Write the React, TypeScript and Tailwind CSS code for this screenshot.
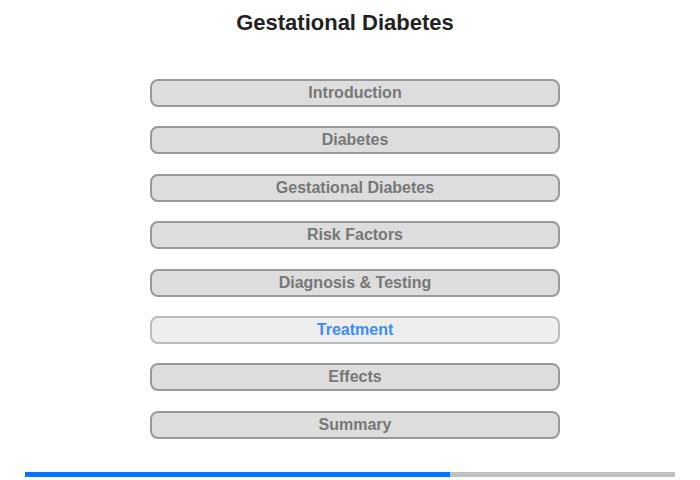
const items = [
  "Introduction",
  "Diabetes",
  "Gestational Diabetes",
  "Risk Factors",
  "Diagnosis & Testing",
  "Treatment",
  "Effects",
  "Summary",
];

export default function App() {
  const active = "Treatment";
  return (
    <div className="w-[700px] h-[480px] bg-white font-['Liberation_Sans',Arial,sans-serif] flex flex-col">
      <h1 className="text-[22px] leading-[26px] font-bold text-[#222] text-center pt-[10px] pr-[10px]">
        Gestational Diabetes
      </h1>
      <div className="flex flex-col items-center gap-[19.4px] mt-[43px] pl-[10px]">
        {items.map((item) => (
          <button
            key={item}
            className={
              item === active
                ? "w-[410px] h-[28px] rounded-[8px] border-2 border-[#bbb] bg-[#eee] text-[16px] font-bold text-[#3b8cff] leading-none"
                : "w-[410px] h-[28px] rounded-[8px] border-2 border-[#999] bg-[#ddd] text-[16px] font-bold text-[#777] leading-none"
            }
          >
            {item}
          </button>
        ))}
      </div>
      <div className="mt-[33px] mx-[25px] h-[5px] bg-[#c0c0c0] flex">
        <div className="w-[425px] h-full bg-[#0077ff]" />
      </div>
    </div>
  );
}
